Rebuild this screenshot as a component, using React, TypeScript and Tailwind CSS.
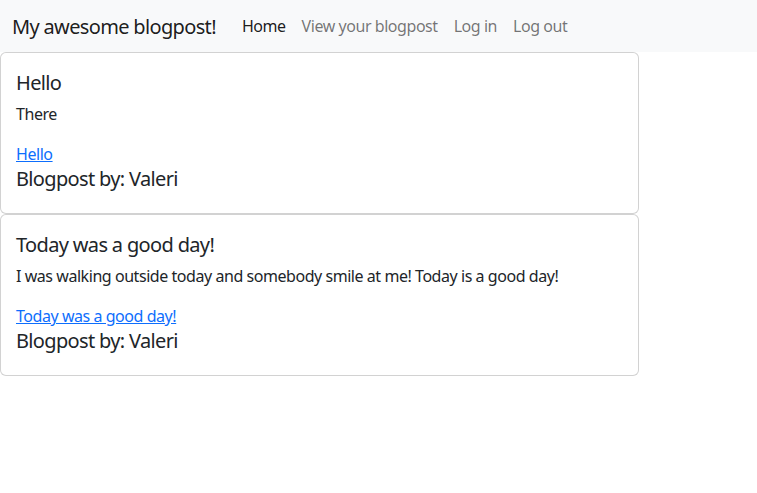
export default function App() {
  const posts = [
    { title: "Hello", body: "There", author: "Valeri" },
    {
      title: "Today was a good day!",
      body: "I was walking outside today and somebody smile at me! Today is a good day!",
      author: "Valeri",
    },
  ];
  return (
    <div
      className="min-h-[493px] bg-white text-[#212529] text-[16px] leading-6 tracking-[-0.028em]"
      style={{ fontFamily: '"Noto Sans", "Open Sans", sans-serif' }}
    >
      <nav className="bg-[#f8f9fa] py-2 px-3 flex items-center h-[52px]">
        <a className="text-[20px] leading-[30px] text-black/90 mr-[18px] py-[5px] tracking-[-0.033em] translate-y-[1px]">
          My awesome blogpost!
        </a>
        <div className="flex">
          <a className="px-2 py-2 text-black/90">Home</a>
          <a className="px-2 py-2 text-black/55">View your blogpost</a>
          <a className="px-2 py-2 text-black/55">Log in</a>
          <a className="px-2 py-2 text-black/55">Log out</a>
        </div>
      </nav>
      <div className="flex flex-col">
        {posts.map((p, i) => (
          <div key={i} className="w-[639px] border border-black/[0.175] rounded-[6px] pl-[15px] pr-4 py-4 bg-white">
            <h5 className="text-[20px] leading-6 mb-2 font-normal translate-y-[2px] tracking-[-0.033em]">{p.title}</h5>
            <p className="mb-4 translate-y-[1px]">{p.body}</p>
            <a href="#" className="text-[#0d6efd] underline block translate-y-[1px]">
              {p.title}
            </a>
            <h5 className="text-[20px] leading-6 mb-2 font-normal translate-y-[2px] tracking-[-0.033em]">
              Blogpost by: {p.author}
            </h5>
          </div>
        ))}
      </div>
    </div>
  );
}
